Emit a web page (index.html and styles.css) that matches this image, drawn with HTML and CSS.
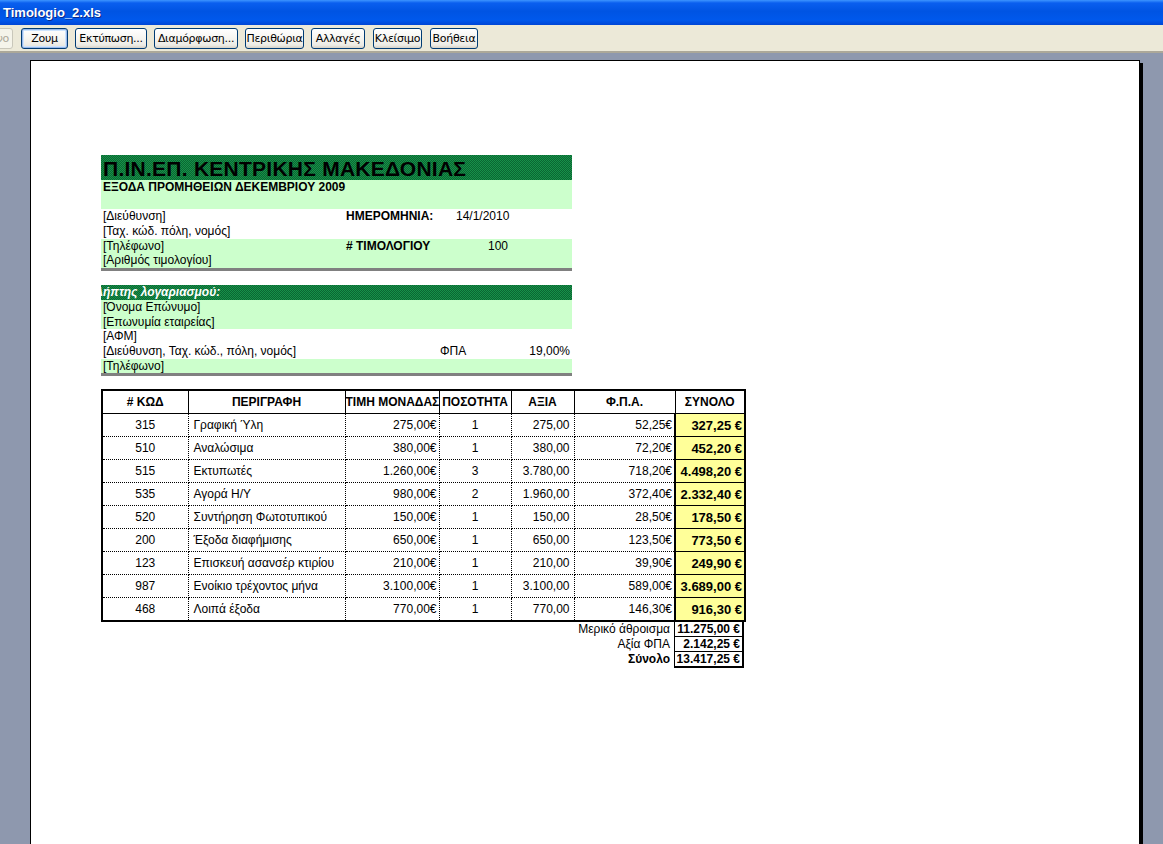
FILE: index.html
```html
<!DOCTYPE html>
<html lang="el">
<head>
<meta charset="utf-8">
<title>Timologio_2.xls</title>
<link rel="stylesheet" href="styles.css">
</head>
<body>
<div class="window">
  <div class="titlebar"><span class="title">Timologio_2.xls</span></div>
  <div class="toolbar">
    <button class="btn btn-prev" disabled>Επόμενο</button>
    <button class="btn btn-default w-zoom">Ζουμ</button>
    <button class="btn w-print">Εκτύπωση...</button>
    <button class="btn w-setup">Διαμόρφωση...</button>
    <button class="btn w-margins">Περιθώρια</button>
    <button class="btn w-breaks">Αλλαγές</button>
    <button class="btn w-close">Κλείσιμο</button>
    <button class="btn w-help">Βοήθεια</button>
  </div>
  <div class="desk">
    <div class="paper">
      <div class="sheet">
        <section class="block">
          <div class="band band-title">Π.ΙΝ.ΕΠ. ΚΕΝΤΡΙΚΗΣ ΜΑΚΕΔΟΝΙΑΣ</div>
          <div class="row green bold">ΕΞΟΔΑ ΠΡΟΜΗΘΕΙΩΝ ΔΕΚΕΜΒΡΙΟΥ 2009</div>
          <div class="row green"></div>
          <div class="row cols"><span>[Διεύθυνση]</span><span class="bold">ΗΜΕΡΟΜΗΝΙΑ:</span><span>14/1/2010</span></div>
          <div class="row">[Ταχ. κώδ. πόλη, νομός]</div>
          <div class="row green cols"><span>[Τηλέφωνο]</span><span class="bold"># ΤΙΜΟΛΟΓΙΟΥ</span><span class="right pr3">100</span></div>
          <div class="row green">[Αριθμός τιμολογίου]</div>
          <div class="rule"></div>
        </section>

        <section class="block block-client">
          <div class="band band-sub"><span class="clip">Λήπτης λογαριασμού:</span></div>
          <div class="row green">[Όνομα Επώνυμο]</div>
          <div class="row green">[Επωνυμία εταιρείας]</div>
          <div class="row">[ΑΦΜ]</div>
          <div class="row cols2"><span>[Διεύθυνση, Ταχ. κώδ., πόλη, νομός]</span><span>ΦΠΑ</span><span class="right">19,00%</span></div>
          <div class="row green">[Τηλέφωνο]</div>
          <div class="rule"></div>
        </section>

        <table class="items">
          <colgroup>
            <col class="c-code"><col class="c-desc"><col class="c-price"><col class="c-qty"><col class="c-val"><col class="c-vat"><col class="c-tot">
          </colgroup>
          <thead>
            <tr><th># ΚΩΔ</th><th>ΠΕΡΙΓΡΑΦΗ</th><th>ΤΙΜΗ ΜΟΝΑΔΑΣ</th><th>ΠΟΣΟΤΗΤΑ</th><th>ΑΞΙΑ</th><th>Φ.Π.Α.</th><th>ΣΥΝΟΛΟ</th></tr>
          </thead>
          <tbody>
            <tr><td class="ctr">315</td><td class="desc">Γραφική Ύλη</td><td class="num">275,00€</td><td class="ctr">1</td><td class="num">275,00</td><td class="num">52,25€</td><td class="tot">327,25 €</td></tr>
            <tr><td class="ctr">510</td><td class="desc">Αναλώσιμα</td><td class="num">380,00€</td><td class="ctr">1</td><td class="num">380,00</td><td class="num">72,20€</td><td class="tot">452,20 €</td></tr>
            <tr><td class="ctr">515</td><td class="desc">Εκτυπωτές</td><td class="num">1.260,00€</td><td class="ctr">3</td><td class="num">3.780,00</td><td class="num">718,20€</td><td class="tot">4.498,20 €</td></tr>
            <tr><td class="ctr">535</td><td class="desc">Αγορά Η/Υ</td><td class="num">980,00€</td><td class="ctr">2</td><td class="num">1.960,00</td><td class="num">372,40€</td><td class="tot">2.332,40 €</td></tr>
            <tr><td class="ctr">520</td><td class="desc">Συντήρηση Φωτοτυπικού</td><td class="num">150,00€</td><td class="ctr">1</td><td class="num">150,00</td><td class="num">28,50€</td><td class="tot">178,50 €</td></tr>
            <tr><td class="ctr">200</td><td class="desc">Έξοδα διαφήμισης</td><td class="num">650,00€</td><td class="ctr">1</td><td class="num">650,00</td><td class="num">123,50€</td><td class="tot">773,50 €</td></tr>
            <tr><td class="ctr">123</td><td class="desc">Επισκευή ασανσέρ κτιρίου</td><td class="num">210,00€</td><td class="ctr">1</td><td class="num">210,00</td><td class="num">39,90€</td><td class="tot">249,90 €</td></tr>
            <tr><td class="ctr">987</td><td class="desc">Ενοίκιο τρέχοντος μήνα</td><td class="num">3.100,00€</td><td class="ctr">1</td><td class="num">3.100,00</td><td class="num">589,00€</td><td class="tot">3.689,00 €</td></tr>
            <tr><td class="ctr">468</td><td class="desc">Λοιπά έξοδα</td><td class="num">770,00€</td><td class="ctr">1</td><td class="num">770,00</td><td class="num">146,30€</td><td class="tot">916,30 €</td></tr>
          </tbody>
        </table>

        <div class="totals">
          <div class="trow"><span class="tlabel">Μερικό άθροισμα</span><span class="tbox">11.275,00 €</span></div>
          <div class="trow"><span class="tlabel">Αξία ΦΠΑ</span><span class="tbox">2.142,25 €</span></div>
          <div class="trow"><span class="tlabel bold">Σύνολο</span><span class="tbox tbox-last">13.417,25 €</span></div>
        </div>
      </div>
    </div>
  </div>
</div>
</body>
</html>
```

FILE: styles.css
```css
html, body {
  margin: 0;
  padding: 0;
  overflow: hidden;
}

body {
  font-family: "Liberation Sans", Arial, sans-serif;
  color: #000;
}

.window {
  height: 844px;
  display: flex;
  flex-direction: column;
}

/* ---------- title bar ---------- */
.titlebar {
  height: 25px;
  flex: none;
  display: flex;
  align-items: center;
  padding-left: 3px;
  background: linear-gradient(#3d95ff 0%, #0a5fef 12%, #0054e3 45%, #0058ec 80%, #0046d5 100%);
}

.title {
  color: #fff;
  font: bold 13px "Liberation Sans", Arial, sans-serif;
  text-shadow: 1px 1px 0 #0a2a8a;
  margin-top: -1px;
}

/* ---------- toolbar ---------- */
.toolbar {
  height: 26px;
  flex: none;
  display: flex;
  align-items: center;
  background: #ece9d8;
  border-bottom: 2px solid #aca899;
  overflow: hidden;
}

.btn {
  flex: none;
  box-sizing: border-box;
  height: 21px;
  padding: 0;
  margin-right: 7px;
  font: 11px "DejaVu Sans", Tahoma, sans-serif;
  letter-spacing: -0.3px;
  color: #000;
  border: 1px solid #003c74;
  border-radius: 3px;
  background: linear-gradient(#ffffff 0%, #f6f5f0 50%, #ecebe5 85%, #d6d0c5 100%);
}

.btn-prev {
  width: 50px;
  margin-left: -37px;
  margin-right: 8px;
  color: #aca899;
  border-color: #c9c7ba;
  background: #f5f4ea;
  text-align: right;
  padding-right: 3px;
}

.btn-default {
  box-shadow: inset 0 0 0 1px #98b8ea, inset 0 0 0 2px #cde4fd;
}

.w-zoom { width: 47px; }
.w-print { width: 72px; }
.w-setup { width: 84px; }
.w-margins { width: 59px; }
.w-breaks { width: 54px; margin-right: 8px; }
.w-close { width: 49px; margin-right: 8px; }
.w-help { width: 48px; }

/* ---------- preview area ---------- */
.desk {
  flex: 1;
  background: #8e98ae;
  padding: 7px 0 0 30px;
  overflow: hidden;
}

.paper {
  box-sizing: border-box;
  width: 1110px;
  height: 900px;
  background: #fff;
  border: 1px solid #000;
  box-shadow: 3px 3px 0 #000;
}

.sheet {
  padding: 94px 0 0 70px;
  font-size: 12px;
}

/* ---------- header blocks ---------- */
.block {
  width: 471px;
}

.block-client {
  margin-top: 14px;
}

.band {
  background-color: #0e7a3c;
  background-image: repeating-conic-gradient(#0a6632 0 25%, #179149 0 50%);
  background-size: 2px 2px;
  overflow: hidden;
  white-space: nowrap;
}

.band-title {
  height: 25px;
  line-height: 27px;
  font-size: 21px;
  letter-spacing: 0.25px;
  font-weight: bold;
  padding-left: 2px;
}

.band-sub {
  height: 15px;
  line-height: 15px;
  color: #fff;
  font-weight: bold;
  font-style: italic;
}

.clip {
  display: inline-block;
  margin-left: -6px;
}

.row {
  height: 14.67px;
  line-height: 15.5px;
  padding-left: 2px;
  white-space: nowrap;
}

.green {
  background: #ccffcc;
}

.bold {
  font-weight: bold;
}

.cols {
  display: grid;
  grid-template-columns: 243px 110px 55px;
}

.cols2 {
  display: grid;
  grid-template-columns: 337px 70px 60px;
}

.right {
  text-align: right;
}

.pr3 {
  padding-right: 3px;
}

.rule {
  height: 3px;
  background: #808080;
}

/* ---------- items table ---------- */
.items {
  margin-top: 13px;
  border-collapse: collapse;
  table-layout: fixed;
  width: 643px;
  border: 2px solid #000;
}

.c-code { width: 86px; }
.c-desc { width: 157px; }
.c-price { width: 94px; }
.c-qty { width: 72px; }
.c-val { width: 63px; }
.c-vat { width: 101px; }
.c-tot { width: 70px; }

.items th {
  height: 22px;
  padding: 0;
  font-weight: bold;
  font-size: 12px;
  border: 1px solid #000;
  white-space: nowrap;
  overflow: hidden;
}

.items td {
  height: 22px;
  padding: 0;
  border: 1px dotted #000;
  white-space: nowrap;
  overflow: hidden;
}

.items td.ctr {
  text-align: center;
}

.items td.desc {
  padding-left: 5px;
}

.items td.num {
  text-align: right;
  padding-right: 2px;
}

.items td:nth-child(5) {
  padding-right: 4px;
}

.items td.tot {
  text-align: right;
  padding-right: 2px;
  font-weight: bold;
  font-size: 13px;
  background: #ffff99;
  border-left: 2px solid #000;
  border-top: 1px solid #000;
  border-bottom: 1px solid #000;
}

.items tr:last-child td {
  border-bottom: 2px solid #000;
}

/* ---------- totals ---------- */
.totals {
  width: 643px;
}

.trow {
  display: flex;
  justify-content: flex-end;
  height: 15px;
  line-height: 14px;
}

.tlabel {
  padding-right: 4px;
}

.tbox {
  box-sizing: border-box;
  width: 70px;
  text-align: right;
  padding-right: 2px;
  font-weight: bold;
  border: 1px solid #000;
  border-top: 0;
  border-right-width: 2px;
}

.tbox-last {
  border-bottom-width: 2px;
  height: 16px;
}
```
